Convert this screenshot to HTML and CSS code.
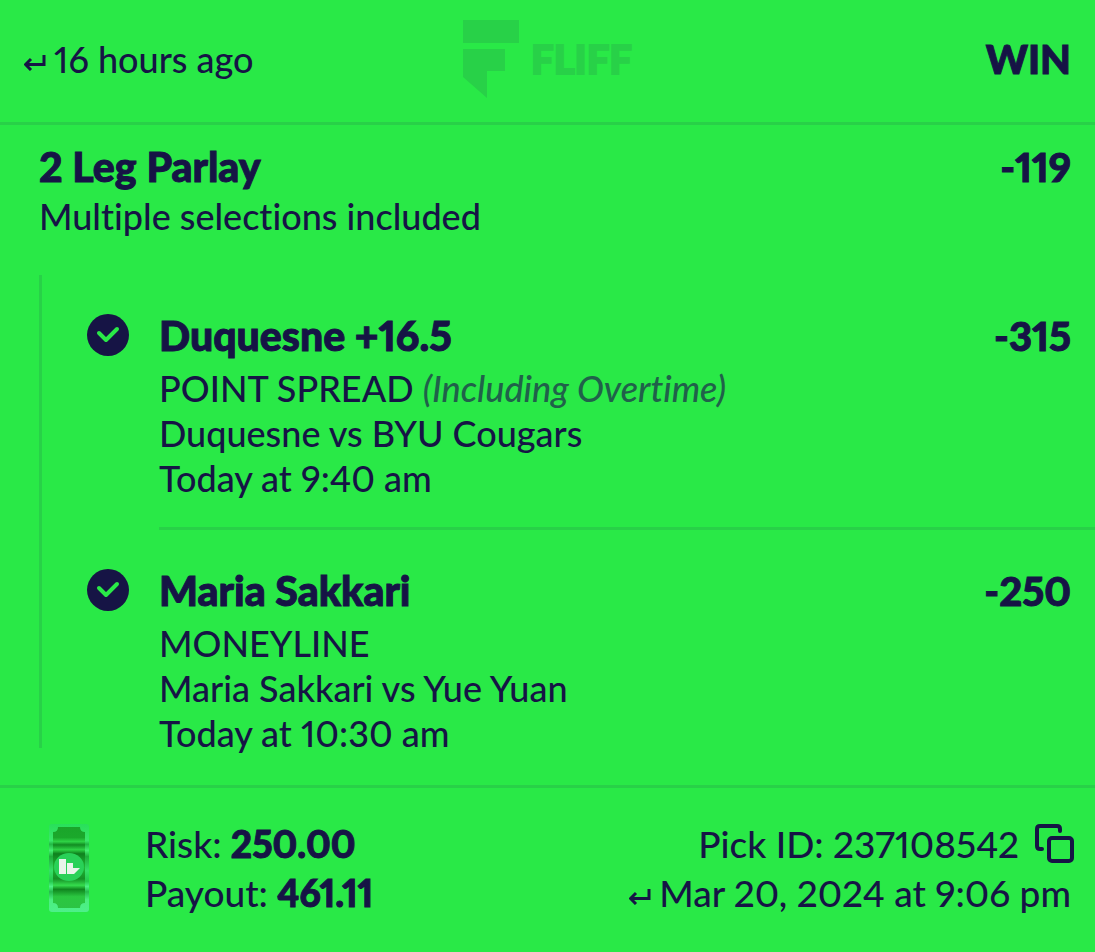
FILE: index.html
```html
<!DOCTYPE html>
<html lang="en">
<head>
    <meta charset="UTF-8">
    <meta name="viewport" content="width=device-width, initial-scale=1.0">
    <title>2 Leg Parlay</title>
    <link rel="stylesheet" href="styles.css">
</head>
<body>
    <main class="ticket">
        <header class="head">
            <p class="stamp">
                <svg class="arrow" viewBox="0 0 22 16" aria-hidden="true"><path d="M20 0V9.500H2M7 4L1.500 9.500L7 15"/></svg>
                16 hours ago
            </p>
            <div class="brand">
                <svg class="mark" viewBox="0 0 56 78" aria-hidden="true"><path d="M0 0H56V23H0ZM0 29H42V51H24V78L0 57Z"/></svg>
                <span>FLIFF</span>
            </div>
            <strong class="result">WIN</strong>
        </header>

        <section class="pick">
            <div class="row">
                <h1 class="title">2 Leg Parlay</h1>
                <span class="odds">-119</span>
            </div>
            <p class="line">Multiple selections included</p>

            <div class="legs">
                <article class="leg">
                    <svg class="check" viewBox="0 0 42 42" aria-hidden="true"><circle cx="21" cy="21" r="21"/><path d="M12 19L19 26L30 15"/></svg>
                    <div class="info">
                        <div class="row">
                            <h2 class="title">Duquesne +16.5</h2>
                            <span class="odds">-315</span>
                        </div>
                        <div class="details">
                            <p class="line">POINT SPREAD <em>(Including Overtime)</em></p>
                            <p class="line">Duquesne vs BYU Cougars</p>
                            <p class="line">Today at 9:40 am</p>
                        </div>
                    </div>
                </article>
                <article class="leg">
                    <svg class="check" viewBox="0 0 42 42" aria-hidden="true"><circle cx="21" cy="21" r="21"/><path d="M12 19L19 26L30 15"/></svg>
                    <div class="info">
                        <div class="row">
                            <h2 class="title">Maria Sakkari</h2>
                            <span class="odds">-250</span>
                        </div>
                        <div class="details">
                            <p class="line">MONEYLINE</p>
                            <p class="line">Maria Sakkari vs Yue Yuan</p>
                            <p class="line">Today at 10:30 am</p>
                        </div>
                    </div>
                </article>
            </div>
        </section>

        <footer class="foot">
            <svg class="cash" viewBox="0 0 40 90" aria-hidden="true">
                <defs>
                    <linearGradient id="edge" x1="0" y1="0" x2="0" y2="1">
                        <stop offset="0" stop-color="#28df5a"/>
                        <stop offset=".19" stop-color="#3be76a"/>
                        <stop offset=".23" stop-color="#22b944"/>
                        <stop offset=".3" stop-color="#45ee72"/>
                        <stop offset=".37" stop-color="#1fae3b"/>
                        <stop offset=".53" stop-color="#36df68"/>
                        <stop offset=".65" stop-color="#24c84b"/>
                        <stop offset=".71" stop-color="#4cf184"/>
                        <stop offset=".77" stop-color="#25b94c"/>
                        <stop offset=".86" stop-color="#4bee80"/>
                        <stop offset="1" stop-color="#4df08a"/>
                    </linearGradient>
                    <linearGradient id="note" x1="0" y1="0" x2="0" y2="1">
                        <stop offset="0" stop-color="#1aa52a"/>
                        <stop offset=".13" stop-color="#1ba82b"/>
                        <stop offset=".18" stop-color="#2ed345"/>
                        <stop offset=".22" stop-color="#128c22"/>
                        <stop offset=".28" stop-color="#2ed345"/>
                        <stop offset=".33" stop-color="#0f811e"/>
                        <stop offset=".5" stop-color="#20b935"/>
                        <stop offset=".64" stop-color="#159026"/>
                        <stop offset=".72" stop-color="#35dc4d"/>
                        <stop offset=".77" stop-color="#10861f"/>
                        <stop offset=".86" stop-color="#2bc741"/>
                        <stop offset="1" stop-color="#2cc444"/>
                    </linearGradient>
                </defs>
                <rect x="0" y="1" width="40" height="88" rx="3" fill="url(#edge)"/>
                <path fill="url(#note)" d="M9 4H31Q31 9 36 9V80Q31 80 31 85H9Q9 80 4 80V9Q9 9 9 4Z"/>
                <ellipse cx="20" cy="44" rx="15" ry="14" fill="#29d158"/>
                <path fill="#e9f4eb" d="M10 36H17V51H10ZM18 40H24V45H31L25 51H18Z"/>
            </svg>
            <div class="amounts">
                <p>Risk: <b>250.00</b></p>
                <p>Payout: <b>461.11</b></p>
            </div>
            <div class="meta">
                <p class="id">
                    Pick ID: 237108542
                    <button class="copy" type="button" aria-label="Copy pick ID">
                        <svg viewBox="0 0 40 40" aria-hidden="true"><rect x="14" y="14" width="23" height="23" rx="3"/><path d="M25 7V5Q25 2 22 2H5Q2 2 2 5V22Q2 25 5 25H7"/></svg>
                    </button>
                </p>
                <p class="stamp">
                    <svg class="arrow" viewBox="0 0 22 16" aria-hidden="true"><path d="M20 0V9.500H2M7 4L1.500 9.500L7 15"/></svg>
                    Mar 20, 2024 at 9:06 pm
                </p>
            </div>
        </footer>
    </main>
</body>
</html>
```
FILE: styles.css
```css
* {
    box-sizing: border-box;
}

body {
    margin: 0;
    background-color: #29e947;
    color: #161445;
    font-family: Lato, "Open Sans", sans-serif;
    font-weight: 500;
    font-size: 36px;
    font-variant-ligatures: no-common-ligatures;
    font-variant-numeric: proportional-nums;
}

p, h1, h2 {
    margin: 0;
}

b, .title, .odds, .result {
    font-weight: 900;
    -webkit-text-stroke: 1px currentColor;
}

/* header */
.head {
    display: grid;
    grid-template-columns: 1fr auto 1fr;
    align-items: center;
    height: 125px;
    padding: 0 24px 4px;
    border-bottom: 3px solid #28d148;
}

.stamp {
    display: flex;
    align-items: center;
    gap: 8px;
}

.arrow {
    width: 22px;
    height: 16px;
    margin-top: 8px;
    fill: none;
    stroke: #161445;
    stroke-width: 3;
}

.brand {
    display: flex;
    align-items: center;
    gap: 12px;
    color: #28d148;
    font-size: 40px;
    font-weight: 900;
    -webkit-text-stroke: 2px currentColor;
}

.mark {
    width: 56px;
    height: 78px;
    fill: #28d148;
}

.result {
    justify-self: end;
    font-size: 40px;
}

/* parlay */
.pick {
    padding: 17px 0 37px 39px;
    border-bottom: 3px solid #28d148;
}

.row {
    display: flex;
    justify-content: space-between;
    margin-bottom: 2px;
    padding-right: 24px;
    font-size: 40px;
    line-height: 50px;
}

.title {
    font-size: 41px;
}

.line {
    line-height: 45px;
}

.line em {
    color: #20614a;
}

.legs {
    display: flow-root;
    margin-top: 36px;
    border-left: 3px solid #28d148;
}

.leg {
    display: flex;
    gap: 30px;
    padding-left: 45px;
}

.leg:last-child {
    margin-bottom: -8px;
}

.check {
    flex: none;
    width: 42px;
    height: 42px;
    margin-top: 39px;
    fill: #161445;
}

.check path {
    fill: none;
    stroke: #29e947;
    stroke-width: 4;
    stroke-linecap: round;
    stroke-linejoin: round;
}

.info {
    flex: 1;
    padding-top: 36px;
}

.leg:not(:last-child) .info {
    padding-bottom: 26px;
    border-bottom: 3px solid #28d148;
}

.details {
    padding-top: 3px;
}

/* footer */
.foot {
    display: flex;
    align-items: flex-start;
    padding: 31px 24px 34px 49px;
    font-size: 37px;
    line-height: 49px;
}

.cash {
    width: 40px;
    height: 90px;
    margin-top: 4px;
}

.amounts {
    margin-left: 56px;
}

.meta {
    display: flex;
    flex-direction: column;
    align-items: flex-end;
    margin-left: auto;
}

.id {
    display: flex;
    align-items: center;
    gap: 16px;
    margin-right: -4px;
}

.copy {
    width: 40px;
    height: 40px;
    padding: 0;
    border: 0;
    background: none;
    cursor: pointer;
}

.copy svg {
    display: block;
    fill: none;
    stroke: #161445;
    stroke-width: 4;
    stroke-linecap: round;
}
```
